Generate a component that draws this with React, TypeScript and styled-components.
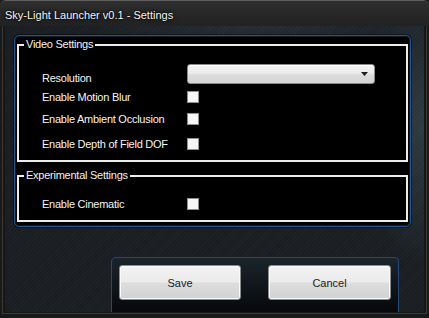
import React from "react";
import styled, { createGlobalStyle } from "styled-components";

const Global = createGlobalStyle`
  html, body { margin: 0; padding: 0; background: #1b1d1f; }
  body { width: 429px; height: 318px; overflow: hidden; font-family: "Liberation Sans", Arial, sans-serif; }
  #root { width: 429px; height: 318px; }
  * { box-sizing: border-box; }
`;

const Window = styled.div`
  width: 429px;
  height: 318px;
  display: flex;
  flex-direction: column;
  background: #1a1b1c;
  border-top: 1px solid #5e5e5e;
  border-radius: 6px 6px 0 0;
  overflow: hidden;
`;

const TitleBar = styled.div`
  height: 25px;
  flex: none;
  display: flex;
  align-items: center;
  padding: 2px 0 0 5px;
  background: linear-gradient(#2f2f2f, #262626 60%, #222222);
`;

const Title = styled.span`
  font-size: 11px;
  color: #f4f4f4;
  text-shadow: 0 0 4px rgba(0, 0, 0, 0.9), 0 0 2px rgba(0, 0, 0, 0.9);
`;

const Frame = styled.div`
  flex: 1;
  display: flex;
  padding: 0 2px 4px 2px;
  background: #17191b;
`;

const FrameInner = styled.div`
  flex: 1;
  display: flex;
  padding: 0 2px 1px 2px;
  border: 1px solid #3f3a31;
  border-top: none;
  background: #141618;
`;

const Client = styled.div`
  flex: 1;
  display: flex;
  flex-direction: column;
  background:
    repeating-linear-gradient(135deg, rgba(255, 255, 255, 0.025) 0 1px, transparent 1px 3px),
    radial-gradient(ellipse 90px 200px at 100% 35%, rgba(70, 95, 110, 0.45), transparent 70%),
    radial-gradient(ellipse 260px 40px at 60% 0%, rgba(60, 80, 95, 0.3), transparent 70%),
    #1a1e22;
`;

const Panel = styled.div`
  margin: 9px 13px 0 9px;
  padding: 8px 2px 4px 2px;
  display: flex;
  flex-direction: column;
  gap: 13px;
  background: #000;
  border: 1px solid #1f5391;
  border-radius: 5px;
  box-shadow: inset 0 0 0 1px #0e1b28, 0 0 0 1px rgba(0, 0, 0, 0.4);
`;

const Group = styled.div<{ $pt: number }>`
  position: relative;
  border: 2px solid #ededed;
  padding: ${(p) => p.$pt}px 0 6px 23px;
  display: flex;
  flex-direction: column;
`;

const Legend = styled.span`
  position: absolute;
  top: -9px;
  left: 5px;
  padding: 0 2px;
  background: #000;
  color: #f2f2f2;
  font-size: 11px;
  line-height: 14px;
  letter-spacing: -0.25px;
`;

const Row = styled.div<{ $mt: number }>`
  height: 20px;
  margin-top: ${(p) => p.$mt}px;
  display: flex;
  align-items: center;
`;

const Label = styled.span<{ $shift?: number }>`
  width: 145px;
  flex: none;
  color: #f4f4f4;
  font-size: 11px;
  line-height: 14px;
  letter-spacing: -0.25px;
  margin-top: ${(p) => (p.$shift ?? 0) * 2}px;
`;

const Check = styled.span`
  width: 12px;
  height: 12px;
  background: #f6f6f6;
  border: 1px solid #8f8f8f;
`;

const Combo = styled.div`
  width: 188px;
  height: 20px;
  display: flex;
  align-items: center;
  justify-content: flex-end;
  padding-right: 6px;
  border: 1px solid #8a8a8a;
  border-radius: 3px;
  background: linear-gradient(#f3f3f3 0%, #ececec 45%, #dcdcdc 55%, #d5d5d5 100%);
  box-shadow: inset 0 1px 0 #fff;
`;

const ButtonBar = styled.div`
  margin: auto 25px 0 106px;
  height: 55px;
  flex: none;
  display: flex;
  gap: 27px;
  padding: 7px 7px 0 7px;
  border: 1px solid #1d4a80;
  border-bottom: none;
  border-radius: 5px 5px 0 0;
  background: linear-gradient(#1b242c, #0f1418 60%, #07090b);
`;

const Button = styled.div<{ $w: number }>`
  width: ${(p) => p.$w}px;
  height: 35px;
  display: flex;
  align-items: center;
  justify-content: center;
  font-size: 11px;
  color: #1c1c1c;
  border: 1px solid #8c8c8c;
  border-radius: 3px;
  background: linear-gradient(#f3f3f3 0%, #ebebeb 48%, #dddddd 52%, #d2d2d2 100%);
  box-shadow: inset 0 0 0 1px #fafafa;
`;

function Arrow() {
  return (
    <svg width="7" height="4" viewBox="0 0 7 4">
      <path d="M0 0H7L3.5 4Z" fill="#1e1e1e" />
    </svg>
  );
}

export default function App() {
  return (
    <>
      <Global />
      <Window>
        <TitleBar>
          <Title>Sky-Light Launcher v0.1 - Settings</Title>
        </TitleBar>
        <Frame>
          <FrameInner>
            <Client>
              <Panel>
                <Group $pt={18}>
                  <Legend>Video Settings</Legend>
                  <Row $mt={0}>
                    <Label $shift={4}>Resolution</Label>
                    <Combo>
                      <Arrow />
                    </Combo>
                  </Row>
                  <Row $mt={3}>
                    <Label>Enable Motion Blur</Label>
                    <Check />
                  </Row>
                  <Row $mt={2}>
                    <Label>Enable Ambient Occlusion</Label>
                    <Check />
                  </Row>
                  <Row $mt={5}>
                    <Label>Enable Depth of Field DOF</Label>
                    <Check />
                  </Row>
                </Group>
                <Group $pt={17}>
                  <Legend>Experimental Settings</Legend>
                  <Row $mt={0}>
                    <Label>Enable Cinematic</Label>
                    <Check />
                  </Row>
                </Group>
              </Panel>
              <ButtonBar>
                <Button $w={122}>Save</Button>
                <Button $w={123}>Cancel</Button>
              </ButtonBar>
            </Client>
          </FrameInner>
        </Frame>
      </Window>
    </>
  );
}
